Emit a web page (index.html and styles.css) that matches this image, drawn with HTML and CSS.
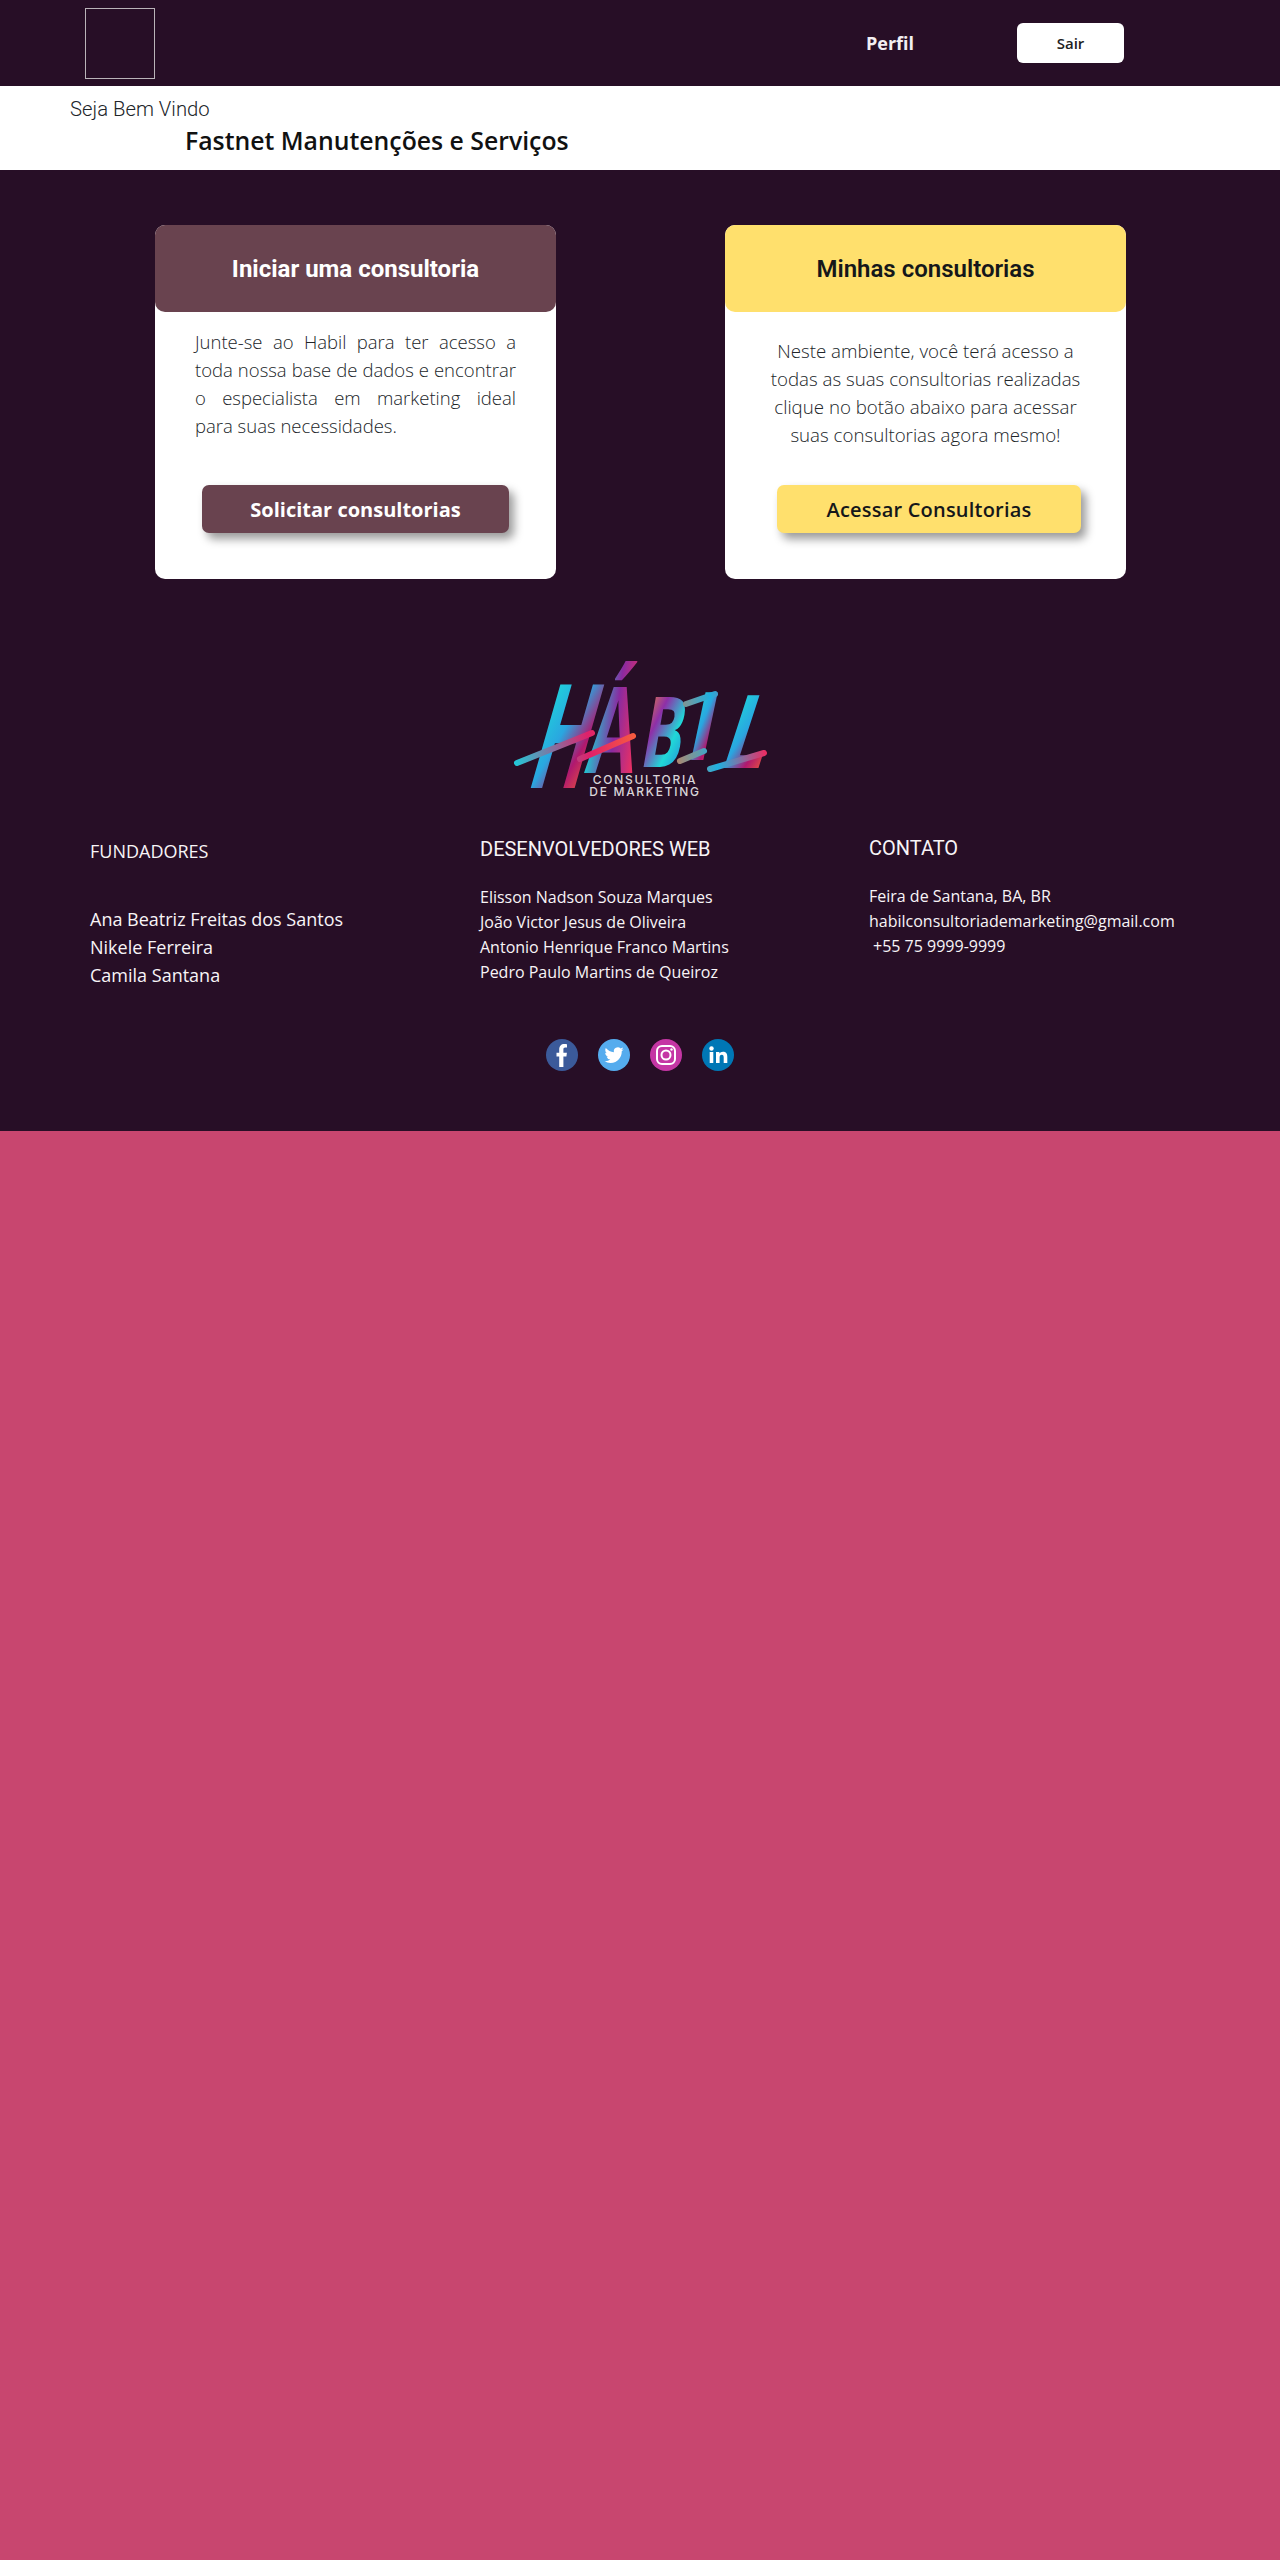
FILE: index.html
```html
<!DOCTYPE html>
<html lang="pt-BR">
<head>
<meta charset="utf-8">
<title>Hábil</title>
<link rel="stylesheet" href="styles.css">
</head>
<body>
<header class="topbar">
  <div class="brand-box"></div>
  <nav class="topnav">
    <a class="nav-link">Perfil</a>
    <a class="nav-btn">Sair</a>
  </nav>
</header>
<section class="welcome">
  <p class="welcome-hello">Seja Bem Vindo</p>
  <p class="welcome-name">Fastnet Manutenções e Serviços</p>
</section>
<main class="main">
  <div class="cards">
    <article class="card">
      <h2 class="card-head head-wine">Iniciar uma consultoria</h2>
      <p class="card-text text-just">Junte-se ao Habil para ter acesso a<br>toda nossa base de dados e encontrar<br>o especialista em marketing ideal<br><span class="last-line">para suas necessidades.</span></p>
      <a class="card-btn btn-wine">Solicitar consultorias</a>
    </article>
    <article class="card">
      <h2 class="card-head head-yellow">Minhas consultorias</h2>
      <p class="card-text text-center">Neste ambiente, você terá acesso a<br>todas as suas consultorias realizadas<br>clique no botão abaixo para acessar<br>suas consultorias agora mesmo!</p>
      <a class="card-btn btn-yellow">Acessar Consultorias</a>
    </article>
  </div>
  <div class="logo-wrap">
    <svg class="logo" viewBox="0 0 280 160" width="280" height="160" role="img" aria-label="Hábil Consultoria de Marketing">
      <defs>
        <linearGradient id="gA" x1="0" y1="0" x2="1" y2="1">
          <stop offset="0" stop-color="#19e8d8"/><stop offset=".45" stop-color="#2aa6e0"/><stop offset=".7" stop-color="#b0186f"/><stop offset="1" stop-color="#ff6a2a"/>
        </linearGradient>
        <linearGradient id="gB" x1="0" y1="0" x2="1" y2="1">
          <stop offset="0" stop-color="#ff9a1e"/><stop offset=".35" stop-color="#8e2fa8"/><stop offset=".65" stop-color="#20d8d8"/><stop offset="1" stop-color="#2a78d8"/>
        </linearGradient>
        <linearGradient id="gC" x1="0" y1="0" x2="1" y2="0">
          <stop offset="0" stop-color="#20c8d0"/><stop offset=".5" stop-color="#8a2aa0"/><stop offset="1" stop-color="#f03060"/>
        </linearGradient>
        <linearGradient id="gD" gradientUnits="userSpaceOnUse" x1="15" y1="113" x2="265" y2="85">
          <stop offset="0" stop-color="#22c8d8"/><stop offset=".3" stop-color="#e0206a"/><stop offset=".55" stop-color="#ff7030"/><stop offset=".8" stop-color="#20b0e0"/><stop offset="1" stop-color="#f02a60"/>
        </linearGradient>
      </defs>
      <text class="logo-letter" transform="translate(24 138) skewX(-16) scale(.75 1.45)" fill="url(#gA)">H</text>
      <text class="logo-letter" transform="translate(84 123) skewX(-8) scale(.7 1.2)" fill="url(#gC)">Á</text>
      <text class="logo-letter" transform="translate(138 117) skewX(-10) scale(.62 .98)" fill="url(#gB)">B</text>
      <text class="logo-letter" transform="translate(184 110) skewX(-12) scale(.8 .95)" fill="url(#gA)">I</text>
      <text class="logo-letter" transform="translate(217 118) skewX(-18) scale(.78 1.02)" fill="url(#gA)">L</text>
      <g class="logo-bars">
        <line x1="17" y1="113" x2="92" y2="83"/>
        <line x1="80" y1="109" x2="133" y2="86"/>
        <line x1="186" y1="54" x2="215" y2="44"/>
        <line x1="180" y1="111" x2="204" y2="101"/>
        <line x1="210" y1="119" x2="264" y2="103"/>
      </g>
      <text class="logo-sub" x="145" y="133.500" text-anchor="middle">CONSULTORIA</text>
      <text class="logo-sub" x="145" y="145.500" text-anchor="middle">DE MARKETING</text>
    </svg>
  </div>
  <div class="footer-cols">
    <section class="col col-a">
      <h3 class="col-title-open">FUNDADORES</h3>
      <p class="col-lines-big">Ana Beatriz Freitas dos Santos<br>Nikele Ferreira<br>Camila Santana</p>
    </section>
    <section class="col col-b">
      <h3 class="col-title">DESENVOLVEDORES WEB</h3>
      <p class="col-lines">Elisson Nadson Souza Marques<br>João Victor Jesus de Oliveira<br>Antonio Henrique Franco Martins<br>Pedro Paulo Martins de Queiroz</p>
    </section>
    <section class="col col-c">
      <h3 class="col-title">CONTATO</h3>
      <p class="col-lines">Feira de Santana, BA, BR<br>habilconsultoriademarketing@gmail.com<br><span class="phone">+55 75 9999-9999</span></p>
    </section>
  </div>
  <div class="social">
    <svg class="soc" viewBox="0 0 32 32" width="32" height="32"><circle cx="16" cy="16" r="16" fill="#3b5a9a"/><path fill="#fff" d="M13.200 28V17.600H10.500v-3.800h2.700v-3.200C13.200 7 15.300 5 18.200 5c1.300 0 2.400.1 2.800.2v3.400h-1.700c-1.500 0-1.900.8-1.900 2v3.200h3.500l-.5 3.800h-3V28z"/></svg>
    <svg class="soc" viewBox="0 0 32 32" width="32" height="32"><circle cx="16" cy="16" r="16" fill="#55acee"/><g transform="translate(6.500 6.500) scale(.8)"><path fill="#fff" d="M23.953 4.57a10 10 0 01-2.825.775 4.958 4.958 0 002.163-2.723c-.951.555-2.005.959-3.127 1.184a4.92 4.92 0 00-8.384 4.482C7.69 8.095 4.067 6.13 1.64 3.162a4.822 4.822 0 00-.666 2.475c0 1.71.87 3.213 2.188 4.096a4.904 4.904 0 01-2.228-.616v.06a4.923 4.923 0 003.946 4.827 4.996 4.996 0 01-2.212.085 4.936 4.936 0 004.604 3.417 9.867 9.867 0 01-6.102 2.105c-.39 0-.779-.023-1.17-.067a13.995 13.995 0 007.557 2.209c9.053 0 13.998-7.496 13.998-13.985 0-.21 0-.42-.015-.63A9.935 9.935 0 0024 4.59z"/></g></svg>
    <svg class="soc" viewBox="0 0 32 32" width="32" height="32"><circle cx="16" cy="16" r="16" fill="#c536a4"/><rect x="7" y="7" width="18" height="18" rx="5" fill="none" stroke="#fff" stroke-width="2"/><circle cx="16" cy="16" r="4.500" fill="none" stroke="#fff" stroke-width="2"/><circle cx="21.500" cy="10.500" r="1.200" fill="#fff"/></svg>
    <svg class="soc" viewBox="0 0 32 32" width="32" height="32"><circle cx="16" cy="16" r="16" fill="#0077b5"/><circle cx="9.500" cy="9.500" r="2.200" fill="#fff"/><rect x="7.700" y="13" width="3.600" height="11" fill="#fff"/><path fill="#fff" d="M14 13h3.400v1.600c.6-1 1.900-1.900 3.600-1.900 3.400 0 4.300 2.200 4.300 5V24h-3.600v-5.500c0-1.500-.4-2.700-1.900-2.700-1.600 0-2.200 1.200-2.200 2.700V24H14z"/></svg>
  </div>
</main>
</body>
</html>
```
FILE: styles.css
```css
* { box-sizing: border-box; }
html, body { margin: 0; padding: 0; }
body { background: #c8466f; font-family: "Open Sans", sans-serif; min-height: 2560px; }
h2, h3, p { margin: 0; font-weight: normal; }

.topbar { height: 86px; background: #270e26; display: flex; align-items: center; justify-content: space-between; padding: 0 156px 0 85px; }
.brand-box { width: 70px; height: 71px; border: 1px solid #b9b3b8; }
.topnav { display: flex; align-items: center; gap: 103px; }
.nav-link { color: #f3eef2; font-weight: 700; font-size: 18px; }
.nav-btn { width: 107px; height: 40px; background: #fff; border-radius: 6px; color: #222; font-weight: 600; font-size: 15px; display: flex; align-items: center; justify-content: center; }

.welcome { height: 84px; background: #fff; padding: 10px 0 0 70px; color: #212529; }
.welcome-hello { font-family: Roboto, sans-serif; font-weight: 300; font-size: 20.300px; line-height: 26px; }
.welcome-name { font-weight: 600; font-size: 24.800px; line-height: 34px; margin: 1px 0 0 115px; color: #111; }

.main { height: 961px; background: #270e26; padding-top: 55px; }
.cards { display: flex; gap: 169px; padding-left: 155px; }
.card { width: 401px; height: 354px; background: #fff; border-radius: 10px; display: flex; flex-direction: column; align-items: center; }
.card-head { width: 100%; height: 87px; border-radius: 10px; font-family: Roboto, sans-serif; font-weight: 700; font-size: 24px; display: flex; align-items: center; justify-content: center; }
.head-wine { background: #69434f; color: #fff; }
.head-yellow { background: #ffe06d; color: #15171a; font-weight: 600; }
.card-text { font-weight: 300; font-size: 18.7px; line-height: 28px; color: #212529; width: 321px; }
.text-just { text-align: justify; text-align-last: justify; margin-top: 16px; height: 157px; font-size: 18.5px; }
.last-line { display: block; text-align-last: left; }
.text-center { text-align: center; margin-top: 25px; height: 148px; width: 340px; }
.card-btn { height: 48px; border-radius: 7px; display: flex; align-items: center; justify-content: center; font-size: 20px; box-shadow: 5px 6px 10px rgba(0, 0, 0, .4); }
.btn-wine { width: 307px; background: #69434f; color: #fff; font-weight: 700; }
.btn-yellow { width: 304px; background: #ffe06d; color: #15171a; font-weight: 600; margin-left: 7px; letter-spacing: .2px; }

.logo-wrap { display: flex; justify-content: center; margin-top: 71px; height: 187px; }
.logo { overflow: visible; }
.logo-letter { font-family: "Open Sans", sans-serif; font-weight: 700; font-size: 100px; }
.logo-bars line { stroke: url(#gD); stroke-width: 6; stroke-linecap: round; }
.logo-sub { font-family: Inter, sans-serif; font-weight: 500; font-size: 12px; letter-spacing: 1.700px; fill: #d9d4d8; }

.footer-cols { display: grid; grid-template-columns: repeat(3, 389px) ; padding-left: 91px; color: #f8f4f7; }
.col-a { margin-left: -1px; }
.col-title-open { font-size: 18px; line-height: 24px; margin-top: 2px; }
.col-title { font-family: Roboto, sans-serif; font-weight: 400; font-size: 20px; line-height: 24px; }
.col-lines-big { font-size: 18px; line-height: 28px; margin-top: 42px; }
.col-lines { font-size: 16px; line-height: 25px; margin-top: 24px; }
.col-c { margin-top: -1px; }
.phone { margin-left: 4px; }

.social { display: flex; justify-content: center; gap: 20px; margin-top: 50px; }
.soc { display: block; }
```
